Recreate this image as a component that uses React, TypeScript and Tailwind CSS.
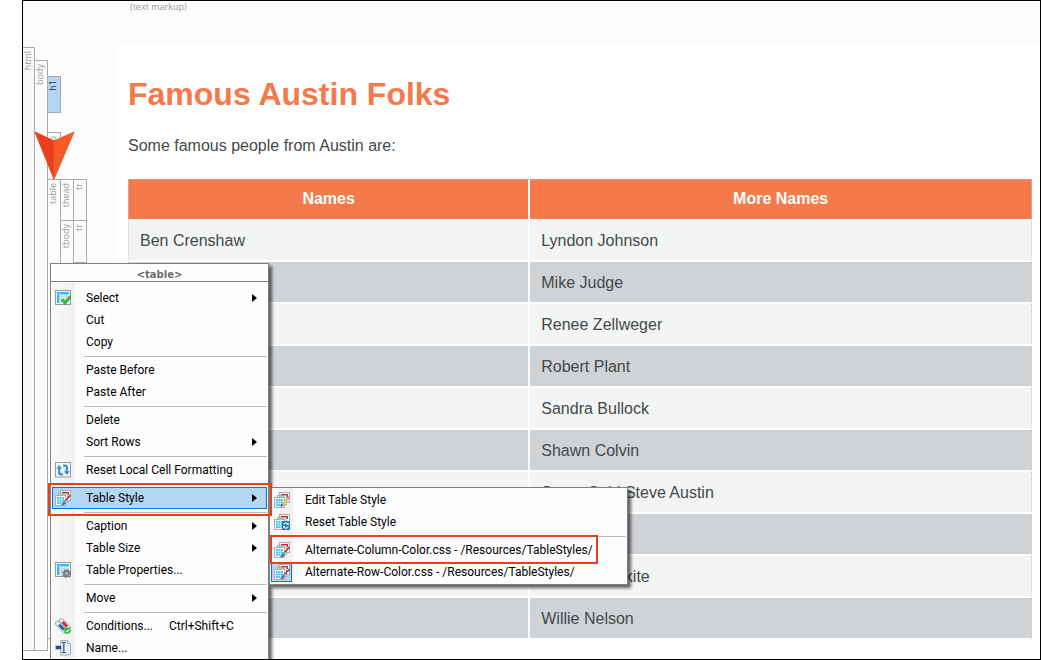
import React from "react";

type IconName = "select" | "reset" | "style" | "props" | "cond" | "name" | "edit" | "styleReset";

function Grid() {
  return (
    <g>
      <rect x="0.5" y="0.5" width="15" height="14" fill="#eef3f6" stroke="#8b9ba5" />
      <rect x="2" y="2" width="12" height="11" fill="#fff" />
      <path d="M2 2h12v2.5H4.5V13H2z" fill="#3fb4ea" />
      <path d="M4.5 6.5H14M4.5 8.5H14M4.5 10.5H14M6.5 4.5V13M9 4.5V13M11.5 4.5V13" stroke="#b9cdd8" strokeWidth="0.8" />
      <path d="M2 4.5h12M4.5 2v11" stroke="#8fd6f6" strokeWidth="0.8" />
    </g>
  );
}

function Sheets() {
  return (
    <g>
      <rect x="5.500" y="0.500" width="10" height="10" fill="#fff" stroke="#a3adb3" />
      <rect x="7" y="2" width="7" height="1.600" fill="#cf2424" />
      <rect x="12.800" y="2" width="1.200" height="3" fill="#cf2424" />
      <rect x="3.500" y="3.500" width="9" height="9" fill="#fff" stroke="#a3adb3" />
      <rect x="4.500" y="4.500" width="6.800" height="1.300" fill="#37b24d" />
      <rect x="0.500" y="5.500" width="10" height="10" fill="#fff" stroke="#a3adb3" />
      <rect x="2" y="7" width="7" height="7" fill="#3fc0ee" />
      <path d="M2 9.300h7M2 11.700h7M4.300 7v7M6.700 7v7" stroke="#d6f3fd" strokeWidth="0.700" />
    </g>
  );
}

function Icon({ name }: { name: IconName }) {
  return (
    <svg width="16" height="16" viewBox="0 0 16 16" aria-hidden="true">
      {(name === "select" || name === "props") && <Grid />}
      {(name === "style" || name === "edit" || name === "styleReset") && <Sheets />}
      {name === "select" && (
        <path d="M6 10.500l2-1.700 2 2.200 4.500-5.200L16 7.500l-5.800 7.300z" fill="#3cc343" stroke="#1f8f2b" strokeWidth="0.6" />
      )}
      {name === "props" && (
        <g>
          <circle cx="11.500" cy="11.500" r="3.400" fill="#7d8286" />
          <circle cx="11.500" cy="11.500" r="3.900" fill="none" stroke="#5f6569" strokeWidth="1.200" strokeDasharray="1.600 1.460" />
          <circle cx="11.500" cy="11.500" r="1.200" fill="#b8bdc0" />
        </g>
      )}
      {name === "style" && (
        <g>
          <path d="M15.500 5L10.500 10.500" stroke="#b33a35" strokeWidth="1.800" />
          <path d="M11 10l-2.200 2.200" stroke="#8f979d" strokeWidth="2.200" />
          <path d="M8.700 11.500c-.7 2.300-1.500 2.800-3 3.300 2 .8 4.400.1 4.700-1.700z" fill="#3d5fb5" />
        </g>
      )}
      {name === "edit" && (
        <g>
          <path d="M14.500 6L8.500 12.800" stroke="#e8bd3f" strokeWidth="2.200" />
          <path d="M15.500 4.800L13.700 7" stroke="#e58b86" strokeWidth="2.200" />
          <path d="M7.300 11.800L6.500 15l3-1.300z" fill="#4a4a4a" />
        </g>
      )}
      {name === "styleReset" && (
        <g>
          <rect x="8" y="7" width="8" height="9" rx="1.500" fill="#1777b8" />
          <path d="M9.800 10.800c.2-2 2.700-2.500 4-1M14.200 12.300c-.2 2-2.700 2.500-4 1" fill="none" stroke="#fff" strokeWidth="1.100" />
          <path d="M14.800 8.500v2.500h-2.500zM9.200 14.600v-2.500h2.500z" fill="#fff" />
        </g>
      )}
      {name === "reset" && (
        <g>
          <rect x="0.500" y="0.500" width="15" height="14.500" fill="#f4f7f9" stroke="#8b9ba5" />
          <path d="M8 12.300H6Q4.200 12.300 4.200 10.500V6" fill="none" stroke="#3a8fd0" strokeWidth="2.200" />
          <path d="M1.200 6.800L4.200 3l3 3.800z" fill="#3a8fd0" />
          <path d="M8 3.700h2q1.800 0 1.800 1.800V10" fill="none" stroke="#3a8fd0" strokeWidth="2.200" />
          <path d="M8.800 9.200l3 3.800 3-3.800z" fill="#3a8fd0" />
        </g>
      )}
      {name === "cond" && (
        <g>
          <path d="M6.500 3L13 9.500" stroke="#8e969b" strokeWidth="5" strokeLinecap="round" />
          <path d="M6.500 3L13 9.500" stroke="#f2f4f5" strokeWidth="3.600" strokeLinecap="round" />
          <path d="M7.500 4L12 8.500" stroke="#d9262b" strokeWidth="2.600" />
          <path d="M2.700 5.500L10.500 13" stroke="#8e969b" strokeWidth="5" strokeLinecap="round" />
          <path d="M2.700 5.500L10.500 13" stroke="#f2f4f5" strokeWidth="3.600" strokeLinecap="round" />
          <path d="M4 6.800L9 11.500" stroke="#1565c0" strokeWidth="2.600" />
          <circle cx="12.500" cy="12.500" r="3.300" fill="#2fb344" />
          <path d="M10.800 12.500l1.300 1.400 2.300-2.700" fill="none" stroke="#fff" strokeWidth="1.100" />
        </g>
      )}
      {name === "name" && (
        <g>
          <path d="M5.500 0.500h7l3 3v11.500h-10z" fill="#e3eef1" stroke="#9db1b9" />
          <path d="M12.500 0.500v3h3" fill="#fff" stroke="#9db1b9" />
          <rect x="0.500" y="5.500" width="6" height="4" fill="#2449a8" stroke="#b5c0dc" />
          <path d="M6.500 2.500h4.500M6.500 12.500h4.500M8.800 2.500v10" stroke="#4c5457" strokeWidth="1.200" />
        </g>
      )}
    </svg>
  );
}

interface Item {
  label: string;
  icon?: IconName;
  arrow?: boolean;
  shortcut?: string;
  active?: boolean;
  checked?: boolean;
}

const tableMenu: Item[][] = [
  [{ label: "Select", icon: "select", arrow: true }, { label: "Cut" }, { label: "Copy" }],
  [{ label: "Paste Before" }, { label: "Paste After" }],
  [{ label: "Delete" }, { label: "Sort Rows", arrow: true }],
  [{ label: "Reset Local Cell Formatting", icon: "reset" }],
  [{ label: "Table Style", icon: "style", arrow: true, active: true }],
  [
    { label: "Caption", arrow: true },
    { label: "Table Size", arrow: true },
    { label: "Table Properties...", icon: "props" },
  ],
  [{ label: "Move", arrow: true }],
  [
    { label: "Conditions...", icon: "cond", shortcut: "Ctrl+Shift+C" },
    { label: "Name...", icon: "name" },
  ],
];

const styleMenu: Item[][] = [
  [
    { label: "Edit Table Style", icon: "edit" },
    { label: "Reset Table Style", icon: "styleReset" },
  ],
  [
    { label: "Alternate-Column-Color.css - /Resources/TableStyles/", icon: "style" },
    { label: "Alternate-Row-Color.css - /Resources/TableStyles/", icon: "style", checked: true },
  ],
];

const people: [string, string][] = [
  ["Ben Crenshaw", "Lyndon Johnson"],
  ["", "Mike Judge"],
  ["", "Renee Zellweger"],
  ["", "Robert Plant"],
  ["", "Sandra Bullock"],
  ["", "Shawn Colvin"],
  ["", "Stone Cold Steve Austin"],
  ["", ""],
  ["", "Thomas O. kite"],
  ["", "Willie Nelson"],
];

function MenuGroups({ groups }: { groups: Item[][] }) {
  return (
    <>
      {groups.map((group, i) => (
        <div key={i} role="group">
          {i > 0 && (
            <div className="flex h-[6px] items-center pl-8">
              <div className="h-px w-full bg-[#bcbcbc]" />
            </div>
          )}
          {group.map((item) => (
            <button
              key={item.label}
              type="button"
              role="menuitem"
              className={
                "flex h-[22px] w-full items-center text-left whitespace-nowrap " +
                (item.active ? "bg-[#b3d6f2] outline-1 -outline-offset-1 outline-[#0078d7]" : "")
              }
            >
              <span
                className={
                  "flex h-5 w-[21px] shrink-0 items-center justify-center " +
                  (item.checked ? "bg-[#b3d6f2] outline-1 -outline-offset-1 outline-[#0078d7]" : "")
                }
              >
                {item.icon && <Icon name={item.icon} />}
              </span>
              <span className="ml-[13px]">{item.label}</span>
              {item.shortcut && <span className="ml-4">{item.shortcut}</span>}
              {item.arrow && (
                <svg className="mr-[10px] ml-auto" width="5" height="8" viewBox="0 0 5 8" aria-hidden="true">
                  <path d="M0 0l5 4-5 4z" fill="#000" />
                </svg>
              )}
            </button>
          ))}
        </div>
      ))}
    </>
  );
}

function Tag({ children }: { children: string }) {
  return <span className="rotate-180 leading-[9px] [writing-mode:vertical-rl]">{children}</span>;
}

function StructureBar() {
  return (
    <div className="flex w-[95px] shrink-0 pt-[2px] pb-2 text-[9px] text-[#999]">
      <div className="flex w-3 items-start border-y border-r border-[#a9a9a9] bg-[#f8f8f8] pt-[3px]">
        <Tag>html</Tag>
      </div>
      <div className="mt-[13px] flex w-[13px] items-start border-y border-r border-[#a9a9a9] pt-[3px]">
        <Tag>body</Tag>
      </div>
      <div className="pt-[29px]">
        <div className="flex h-[37px] w-[13px] items-start border-y border-r border-[#a9a9a9] bg-[#b3d6f2] pt-[3px] text-[#333]">
          <Tag>h1</Tag>
        </div>
        <div className="mt-[19px] flex h-[26px] w-[13px] items-start border-y border-r border-[#a9a9a9] pt-[3px]">
          <Tag>p</Tag>
        </div>
        <div className="mt-[21px] flex h-[460px] border-y border-[#a9a9a9]">
          <div className="flex w-[13px] items-start border-r border-[#a9a9a9] pt-[3px]">
            <Tag>table</Tag>
          </div>
          <div className="flex flex-col">
            <div className="flex h-[41px] border-b border-[#a9a9a9]">
              <div className="flex w-[13px] items-start border-r border-[#a9a9a9] pt-[3px]">
                <Tag>thead</Tag>
              </div>
              <div className="flex w-[13px] items-start border-r border-[#a9a9a9] pt-[3px]">
                <Tag>tr</Tag>
              </div>
            </div>
            <div className="flex flex-1">
              <div className="flex w-[13px] items-start border-r border-[#a9a9a9] pt-[3px]">
                <Tag>tbody</Tag>
              </div>
              <div className="flex h-[42px] w-[13px] items-start border-r border-b border-[#a9a9a9] pt-[3px]">
                <Tag>tr</Tag>
              </div>
            </div>
          </div>
        </div>
      </div>
    </div>
  );
}

export default function App() {
  return (
    <div className="h-screen bg-white pl-[22px]">
      <div className="relative flex h-full flex-col overflow-hidden border border-black bg-[#fcfcfc] font-['Open_Sans',sans-serif]">
        <div className="h-11 shrink-0 pl-[107px] text-[9px] leading-[12px] text-[#999]">(text markup)</div>
        <div className="flex flex-1">
          <StructureBar />
          <main className="flex-1 bg-white pr-2 pl-[10px] font-['Liberation_Sans',Arial,sans-serif] text-base text-[#45484a]">
            <h1 className="pt-[29px] text-[32px] leading-[40px] font-bold text-[#f4794b]">Famous Austin Folks</h1>
            <p className="mt-5 leading-6">Some famous people from Austin are:</p>
            <table className="mt-[21px] w-full table-fixed border-separate border-spacing-0">
              <colgroup>
                <col className="w-[44.5%]" />
                <col />
              </colgroup>
              <thead>
                <tr className="h-[41px] bg-[#f4794b] text-white">
                  <th className="border-t border-r-2 border-b border-l border-white border-t-[#b9b9b9] border-l-[#c8cccf] pb-[2px] [border-left-style:dotted] [border-top-style:dotted]">
                    Names
                  </th>
                  <th className="border-t border-r border-b border-white border-t-[#b9b9b9] border-r-[#c8cccf] pb-[2px] [border-right-style:dotted] [border-top-style:dotted]">
                    More Names
                  </th>
                </tr>
              </thead>
              <tbody>
                {people.map(([a, b], i) => (
                  <tr key={i} className={"h-[42px] " + (i % 2 ? "bg-[#cfd3d6]" : "bg-[#f3f5f4]")}>
                    <td className="border-r-2 border-b-2 border-l border-white border-l-[#c8cccf] pt-[2px] pl-[11px] [border-left-style:dotted]">
                      {a}
                    </td>
                    <td className="border-r border-b-2 border-white border-r-[#c8cccf] pt-[2px] pl-[11px] [border-right-style:dotted]">
                      {b}
                    </td>
                  </tr>
                ))}
              </tbody>
            </table>
          </main>
        </div>

        <svg className="absolute top-[130px] left-[11px]" width="42" height="50" viewBox="0 0 42 50" aria-hidden="true">
          <path d="M1 1l19 9v38z" fill="#e8401c" stroke="#e8401c" strokeLinejoin="round" />
          <path d="M40 1l-20 9v38z" fill="#f55a2a" stroke="#f55a2a" strokeLinejoin="round" />
        </svg>

        <div
          role="menu"
          aria-label="table"
          className="absolute top-[262px] left-[27px] w-[219px] border border-[#808080] bg-[#fdfdfd] font-[Roboto,sans-serif] text-[12px] text-black shadow-[3px_3px_3px_rgba(0,0,0,0.6)]"
        >
          <div className="h-[18px] border-b border-[#808080] text-center font-['DejaVu_Sans',sans-serif] text-[10px] leading-[22px] font-bold text-[#6d6d6d]">
            &lt;table&gt;
          </div>
          <div className="bg-[linear-gradient(to_right,#fafafa,#f0f0f0_24px,#fdfdfd_24px)] px-px pt-[5px] pb-1">
            <MenuGroups groups={tableMenu} />
          </div>
        </div>

        <div
          role="menu"
          aria-label="Table Style"
          className="absolute top-[486px] left-[246px] w-[359px] border border-[#808080] bg-[#fdfdfd] font-[Roboto,sans-serif] text-[12px] text-black shadow-[3px_3px_3px_rgba(0,0,0,0.6)]"
        >
          <div className="bg-[linear-gradient(to_right,#fafafa,#f0f0f0_23px,#fdfdfd_23px)] p-px">
            <MenuGroups groups={styleMenu} />
          </div>
        </div>

        <div className="pointer-events-none absolute top-[482px] left-[25px] h-[33px] w-[224px] border-2 border-[#e8401c]" />
        <div className="pointer-events-none absolute top-[534px] left-[247px] h-[29px] w-[328px] border-2 border-[#e8401c]" />
      </div>
    </div>
  );
}
